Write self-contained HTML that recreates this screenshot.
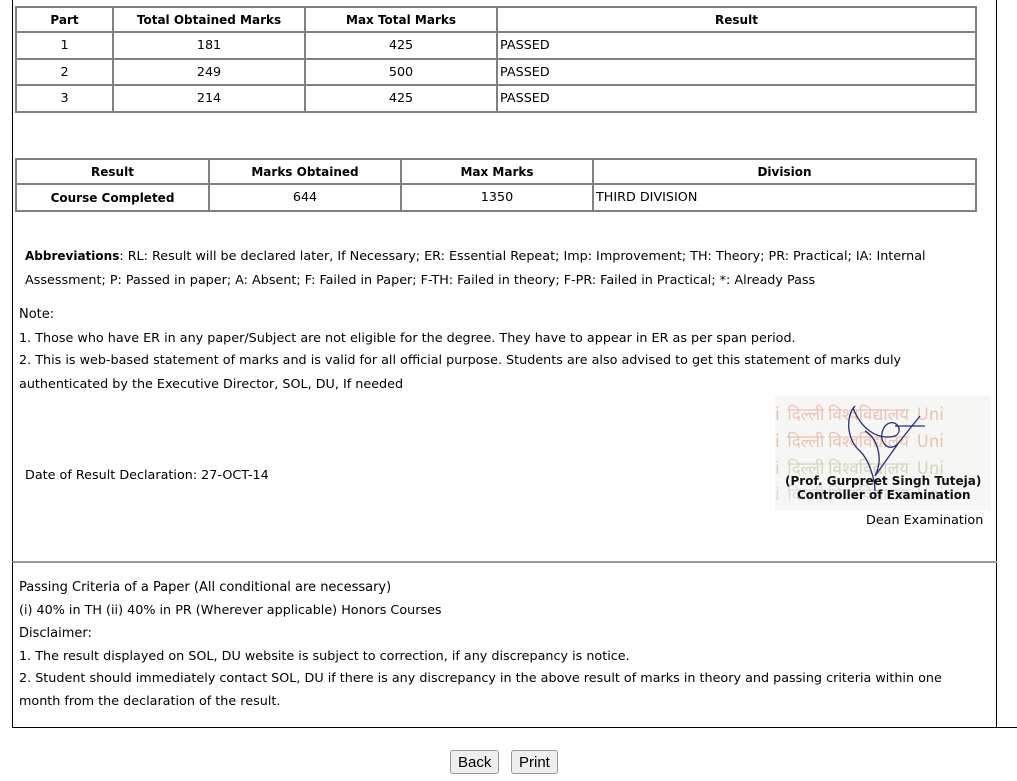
<!DOCTYPE html>
<html><head><style>
body{margin:0;width:1017px;height:781px;background:#fff;font-family:"DejaVu Sans",Verdana,sans-serif;font-size:12.75px;color:#000;position:relative;overflow:hidden}
.a{position:absolute;white-space:nowrap}
table{position:absolute;border-collapse:collapse;table-layout:fixed}
td{border:2px solid #808080;padding:0 2px;font-size:12.75px}
td.c{text-align:center}
th{border:2px solid #808080;font-weight:bold;font-size:12px;padding:0}
.sig{position:absolute;left:775px;top:396px;width:216px;height:114px;background:#f6f6f4;overflow:hidden}
.hin{position:absolute;font-size:17px;font-family:"Noto Sans CJK SC",sans-serif;white-space:nowrap}
button{position:absolute;font-family:"Liberation Sans",sans-serif;font-size:15px;background:#eee;border:1px solid #999;border-radius:3px;height:24px;padding:0 7px}
</style></head><body>
<div style="position:absolute;left:12px;top:0;width:1px;height:562px;background:#000"></div>
<div style="position:absolute;left:996px;top:0;width:1px;height:728px;background:#000"></div>
<div style="position:absolute;left:12px;top:561px;width:985px;height:2px;background:#999"></div>
<div style="position:absolute;left:12px;top:562px;width:1px;height:166px;background:#000"></div>
<div style="position:absolute;left:12px;top:727px;width:1005px;height:1px;background:#000"></div>

<table style="left:15px;top:6px;width:962px">
<colgroup><col style="width:97px"><col style="width:192px"><col style="width:192px"><col></colgroup>
<tr style="height:25px"><th>Part</th><th>Total Obtained Marks</th><th>Max Total Marks</th><th>Result</th></tr>
<tr style="height:27px"><td class="c">1</td><td class="c">181</td><td class="c">425</td><td>PASSED</td></tr>
<tr style="height:26px"><td class="c">2</td><td class="c">249</td><td class="c">500</td><td>PASSED</td></tr>
<tr style="height:27px"><td class="c">3</td><td class="c">214</td><td class="c">425</td><td>PASSED</td></tr>
</table>

<table style="left:15px;top:158px;width:962px">
<colgroup><col style="width:193px"><col style="width:192px"><col style="width:192px"><col></colgroup>
<tr style="height:25px"><th>Result</th><th>Marks Obtained</th><th>Max Marks</th><th>Division</th></tr>
<tr style="height:27px"><td class="c" style="font-weight:bold;font-size:12px">Course Completed</td><td class="c">644</td><td class="c">1350</td><td>THIRD DIVISION</td></tr>
</table>

<div class="a" style="left:25px;top:249px"><b style="font-size:12px">Abbreviations</b>: RL: Result will be declared later, If Necessary; ER: Essential Repeat; Imp: Improvement; TH: Theory; PR: Practical; IA: Internal</div>
<div class="a" style="left:25px;top:273px">Assessment; P: Passed in paper; A: Absent; F: Failed in Paper; F-TH: Failed in theory; F-PR: Failed in Practical; *: Already Pass</div>
<div class="a" style="left:19px;top:307px;font-size:13px">Note:</div>
<div class="a" style="left:19px;top:331px">1. Those who have ER in any paper/Subject are not eligible for the degree. They have to appear in ER as per span period.</div>
<div class="a" style="left:19px;top:353px">2. This is web-based statement of marks and is valid for all official purpose. Students are also advised to get this statement of marks duly</div>
<div class="a" style="left:19px;top:377px">authenticated by the Executive Director, SOL, DU, If needed</div>
<div class="a" style="left:25px;top:468px">Date of Result Declaration: 27-OCT-14</div>

<div class="sig">
<div class="hin" style="left:0;top:4px;color:#e9c3b0">i&nbsp; दिल्ली विश्वविद्यालय&nbsp; Uni</div>
<div class="hin" style="left:0;top:31px;color:#e9c3b0">i&nbsp; दिल्ली विश्वविद्यालय&nbsp; Uni</div>
<div class="hin" style="left:0;top:58px;color:#cdd9b8">i&nbsp; दिल्ली विश्वविद्यालय&nbsp; Uni</div>
<div class="hin" style="left:0;top:84px;color:#dcdcdc">i&nbsp; दिल्ली विश्वविद्यालय&nbsp; Uni</div>
<svg style="position:absolute;left:0;top:0" width="216" height="114"><path d="M80 10 C70 20 72 45 85 55 C95 65 100 85 100 95 M78 12 C85 30 100 45 120 40 C130 35 120 20 110 30 C100 45 115 60 125 45 L145 20 M90 35 C100 40 110 60 100 80 L125 45 M120 30 L150 30" fill="none" stroke="#2a2e7a" stroke-width="1.3"/></svg>
<div class="a" style="left:10px;top:78px;font-weight:bold;font-size:12px;color:#111">(Prof. Gurpreet Singh Tuteja)</div>
<div class="a" style="left:22px;top:92px;font-weight:bold;font-size:12px;color:#111">Controller of Examination</div>
</div>
<div class="a" style="left:866px;top:513px">Dean Examination</div>

<div class="a" style="left:19px;top:580px;font-size:13px">Passing Criteria of a Paper (All conditional are necessary)</div>
<div class="a" style="left:19px;top:603px">(i) 40% in TH (ii) 40% in PR (Wherever applicable) Honors Courses</div>
<div class="a" style="left:19px;top:626px;font-size:13px">Disclaimer:</div>
<div class="a" style="left:19px;top:649px">1. The result displayed on SOL, DU website is subject to correction, if any discrepancy is notice.</div>
<div class="a" style="left:19px;top:671px">2. Student should immediately contact SOL, DU if there is any discrepancy in the above result of marks in theory and passing criteria within one</div>
<div class="a" style="left:19px;top:694px">month from the declaration of the result.</div>

<button style="left:450px;top:750px">Back</button>
<button style="left:511px;top:750px">Print</button>
</body></html>
